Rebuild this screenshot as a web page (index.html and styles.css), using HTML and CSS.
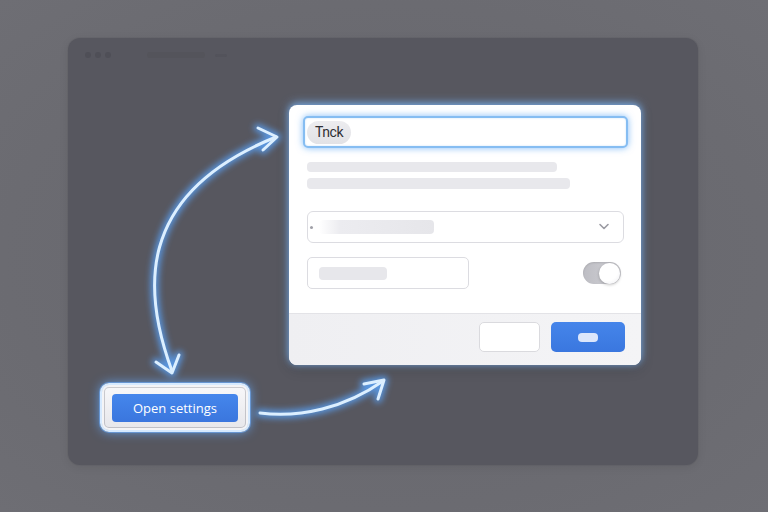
FILE: index.html
```html
<!DOCTYPE html>
<html lang="en">
<head>
<meta charset="utf-8">
<title>Open settings flow</title>
<link rel="stylesheet" href="styles.css">
</head>
<body>
<div class="stage">
  <div class="window">
    <div class="titlebar">
      <span class="dot"></span><span class="dot"></span><span class="dot"></span>
      <span class="title-bar-text"></span><span class="title-tilde"></span>
    </div>

    <svg class="arrows" viewBox="68 38 630 427" width="630" height="427" aria-hidden="true">
      <defs>
        <filter id="glow" x="-20%" y="-20%" width="140%" height="140%">
          <feGaussianBlur stdDeviation="3.2"/>
        </filter>
      </defs>
      <g fill="none" stroke-linecap="round" stroke-linejoin="round">
        <g stroke="#5aa6ff" stroke-width="8" opacity="0.8" filter="url(#glow)">
          <path d="M172 371 C144 295, 132 195, 276 137"/>
          <path d="M258 128 L277 137 L263 150"/>
          <path d="M156 362 L172 373 L179 355"/>
          <path d="M260 413 C300 418, 345 408, 383 381"/>
          <path d="M364 384 L384 380 L378 399"/>
        </g>
        <g stroke="#dcefff" stroke-width="3">
          <path d="M172 371 C144 295, 132 195, 276 137"/>
          <path d="M258 128 L277 137 L263 150"/>
          <path d="M156 362 L172 373 L179 355"/>
          <path d="M260 413 C300 418, 345 408, 383 381"/>
          <path d="M364 384 L384 380 L378 399"/>
        </g>
      </g>
    </svg>

    <div class="dialog">
      <div class="dialog-body">
        <div class="search-input">
          <span class="chip">Tnck</span>
        </div>
        <div class="lines">
          <div class="skel skel-a"></div>
          <div class="skel skel-b"></div>
        </div>
        <div class="select">
          <span class="select-dot"></span>
          <span class="select-ph"></span>
          <svg class="chevron" width="12" height="8" viewBox="0 0 12 8"><path d="M2 1.5 L6 5.5 L10 1.5" fill="none" stroke="#9a9aa2" stroke-width="1.6" stroke-linecap="round" stroke-linejoin="round"/></svg>
        </div>
        <div class="row">
          <div class="small-input"><span class="small-ph"></span></div>
          <div class="toggle"><span class="knob"></span></div>
        </div>
      </div>
      <div class="dialog-footer">
        <button class="btn-secondary" type="button"></button>
        <button class="btn-primary" type="button"><span class="btn-pill"></span></button>
      </div>
    </div>

    <div class="trigger">
      <button class="trigger-btn" type="button">Open settings</button>
    </div>
  </div>
</div>
</body>
</html>
```

FILE: styles.css
```css
* { box-sizing: border-box; }

html, body {
  margin: 0;
  padding: 0;
}

body {
  width: 768px;
  height: 512px;
  overflow: hidden;
  background: #6a6a70;
  font-family: "Open Sans", "Noto Sans", "Liberation Sans", sans-serif;
}

.stage {
  width: 768px;
  height: 512px;
  padding: 38px 70px 47px 68px;
  background: radial-gradient(ellipse at 50% 50%, #66666d 0%, #6b6b71 70%, #6e6e74 100%);
}

.window {
  position: relative;
  width: 630px;
  height: 427px;
  border-radius: 12px;
  background: #57575f;
  box-shadow: 0 0 0 1px rgba(0,0,0,0.03), 0 2px 10px rgba(0,0,0,0.08);
}

.titlebar {
  display: flex;
  align-items: center;
  gap: 4px;
  height: 34px;
  padding: 0 0 0 17px;
}

.dot {
  width: 6px;
  height: 6px;
  border-radius: 50%;
  background: #4f4f57;
}

.title-bar-text {
  width: 58px;
  height: 6px;
  margin-left: 32px;
  border-radius: 3px;
  background: #54545b;
}

.title-tilde {
  width: 12px;
  height: 3px;
  margin-left: 6px;
  border-radius: 2px;
  background: #53535b;
}

.arrows {
  position: absolute;
  left: 0;
  top: 0;
  overflow: visible;
  pointer-events: none;
}

/* Dialog node on the diagram */
.dialog {
  position: absolute;
  left: 221px;
  top: 67px;
  width: 352px;
  height: 260px;
  display: flex;
  flex-direction: column;
  background: #ffffff;
  border-radius: 8px;
  overflow: hidden;
  box-shadow: 0 -2px 10px rgba(130, 190, 255, 0.75), 0 0 6px rgba(120, 180, 255, 0.35), 0 4px 14px rgba(0,0,0,0.15);
}

.dialog-body {
  flex: 1;
  display: flex;
  flex-direction: column;
  padding: 11px 13px 0 18px;
}

.search-input {
  display: flex;
  align-items: center;
  width: 325px;
  height: 32px;
  margin-left: -4px;
  padding: 0 0 0 2px;
  border: 2px solid #86bdf2;
  border-radius: 5px;
  background: #fff;
  box-shadow: 0 0 7px rgba(90, 165, 245, 0.75), inset 0 0 2px rgba(120, 180, 240, 0.4);
}

.chip {
  display: inline-flex;
  align-items: center;
  height: 23px;
  padding: 0 8px 0 8px;
  border-radius: 12px;
  background: linear-gradient(#ececef, #e2e2e6);
  color: #2f2f35;
  font-family: Roboto, "Liberation Sans", sans-serif;
  font-size: 14px;
  letter-spacing: -0.4px;
}

.lines {
  display: flex;
  flex-direction: column;
  gap: 6px;
  margin-top: 14px;
}

.skel {
  height: 11px;
  border-radius: 4px;
  background: #e8e8ec;
}

.skel-a { width: 250px; height: 10px; }
.skel-b { width: 263px; }

.select {
  display: flex;
  align-items: center;
  width: 317px;
  height: 32px;
  margin-top: 22px;
  padding: 0 13px 0 2px;
  border: 1px solid #dcdce1;
  border-radius: 6px;
}

.select-dot {
  width: 3px;
  height: 3px;
  border-radius: 50%;
  background: #a0a0a8;
}

.select-ph {
  width: 115px;
  height: 14px;
  margin-left: 6px;
  border-radius: 4px;
  background: linear-gradient(90deg, #ffffff 0%, #ececf0 18%, #e6e6ea 100%);
}

.chevron {
  margin-left: auto;
}

.row {
  display: flex;
  align-items: center;
  justify-content: space-between;
  margin-top: 14px;
  padding-right: 7px;
}

.small-input {
  display: flex;
  align-items: center;
  width: 162px;
  height: 32px;
  padding-left: 11px;
  border: 1px solid #dcdce1;
  border-radius: 5px;
}

.small-ph {
  width: 68px;
  height: 13px;
  border-radius: 4px;
  background: #e7e7eb;
}

.toggle {
  display: flex;
  align-items: center;
  justify-content: flex-end;
  width: 38px;
  height: 22px;
  padding: 0 1px;
  border-radius: 11px;
  background: linear-gradient(90deg, #bdbdc3, #d3d3d8);
  box-shadow: inset 0 1px 2px rgba(0,0,0,0.12);
}

.knob {
  width: 21px;
  height: 21px;
  border-radius: 50%;
  background: radial-gradient(circle at 40% 35%, #ffffff 55%, #ececf0 100%);
  box-shadow: 0 1px 3px rgba(0,0,0,0.25);
}

.dialog-footer {
  display: flex;
  justify-content: flex-end;
  align-items: flex-start;
  gap: 11px;
  height: 52px;
  padding: 8px 16px 0 0;
  border-top: 1px solid #e3e3e7;
  background: linear-gradient(90deg, #efeff2, #f4f4f6);
}

.btn-secondary {
  width: 61px;
  height: 30px;
  border: 1px solid #dadade;
  border-radius: 5px;
  background: #ffffff;
}

.btn-primary {
  display: flex;
  align-items: center;
  justify-content: center;
  width: 74px;
  height: 30px;
  border: none;
  border-radius: 5px;
  background: linear-gradient(#4585ea, #3a77df);
}

.btn-pill {
  width: 20px;
  height: 9px;
  border-radius: 4px;
  background: #dbe6fb;
}

/* Trigger node on the diagram */
.trigger {
  position: absolute;
  left: 32px;
  top: 345px;
  display: flex;
  align-items: center;
  justify-content: center;
  width: 150px;
  height: 49px;
  border: 2px solid #d6eaff;
  border-radius: 9px;
  background: linear-gradient(#f8f8fa, #e6e6ea);
  box-shadow: inset 0 0 0 2px #f4f4f6, inset 0 0 0 3px rgba(120,120,130,0.35), 0 0 0 1px rgba(110, 170, 245, 0.6), 0 0 11px rgba(100, 170, 255, 0.85);
}

.trigger-btn {
  width: 126px;
  height: 28px;
  border: none;
  border-radius: 4px;
  background: linear-gradient(#4586ec, #3a76de);
  color: #ffffff;
  font-family: "Open Sans", "Noto Sans", sans-serif;
  font-size: 13px;
  font-weight: 500;
  padding: 0;
}
```
